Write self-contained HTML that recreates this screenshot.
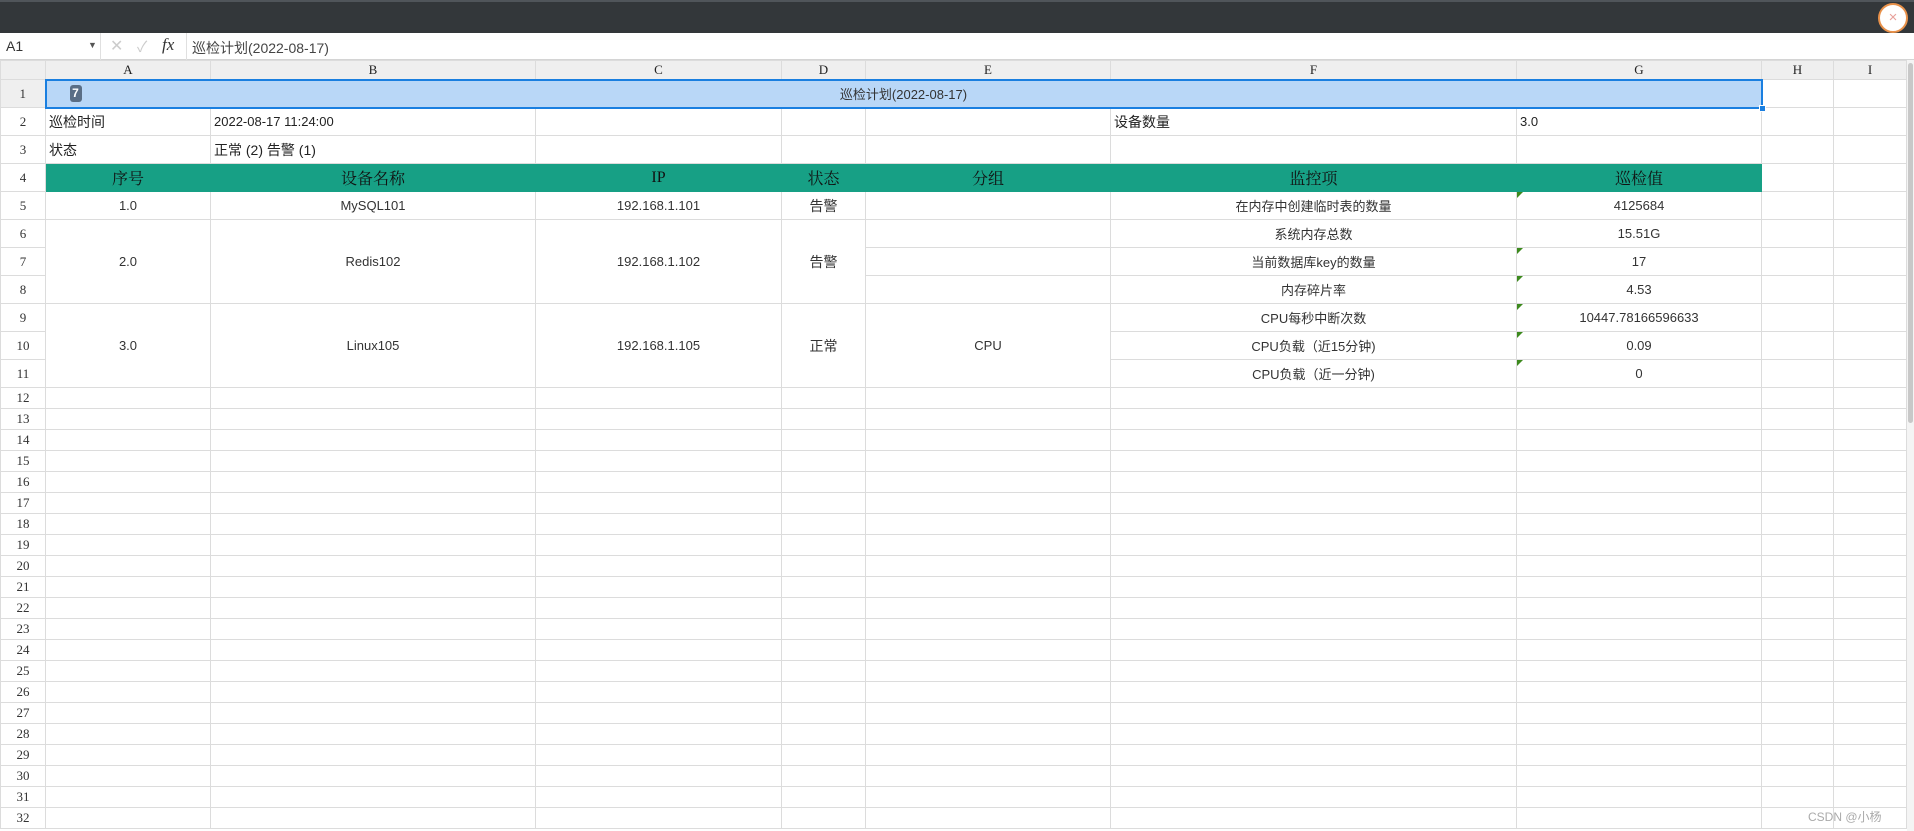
<!DOCTYPE html>
<html><head><meta charset="utf-8"><style>
*{box-sizing:border-box;margin:0;padding:0}
body{width:1914px;height:831px;overflow:hidden;background:#fff;position:relative;font-family:"Liberation Sans","Noto Sans CJK SC",sans-serif;color:#222}
.top{position:absolute;left:0;top:0;width:1914px;height:33px;background:#33373a;border-top:2px solid #50555a}
.close{position:absolute;left:1878px;top:1px;width:30px;height:30px;border-radius:50%;background:#fff;border:2px solid #e8914a;color:#e8a09a;font-size:15px;text-align:center;line-height:25px}
.fbar{position:absolute;left:0;top:33px;width:1914px;height:27px;border-bottom:1px solid #d4d4d4;font-size:14px}
.fbar span{position:absolute;top:5px}
.sep{position:absolute;top:0;width:1px;height:27px;background:#e0e0e0}
table{position:absolute;left:0;top:60px;border-collapse:collapse;table-layout:fixed}
td{border:1px solid #dcdcdc;font-size:13px;text-align:center;white-space:nowrap;overflow:visible;padding:0;position:relative;color:#333}
tr.h td{height:19px;background:#efefef;font-family:"Liberation Serif","Noto Serif CJK SC",serif;font-size:13px;color:#222}
tr.r td{height:28px}
tr.s td{height:21px}
td.rh{background:#fff;font-family:"Liberation Serif",serif;font-size:13px;color:#333}
td.l{text-align:left;padding-left:3px;font-size:14px;color:#222}
tr.g td.gc{background:#17a085;font-family:"Liberation Serif","Noto Serif CJK SC",serif;font-size:16px;color:#111;border-color:#17a085}
.tri{position:absolute;left:0;top:0;width:0;height:0;border-top:6px solid #3d8a1e;border-right:6px solid transparent}
.sb{position:absolute;left:1907px;top:60px;width:7px;height:771px;background:#f4f4f4}
.sb div{position:absolute;left:1px;top:3px;width:5px;height:360px;background:#c8c8c8;border-radius:3px}
</style></head><body>
<div class="top"><div class="close">×</div></div>
<div class="fbar">
<span style="left:6px;color:#333;font-size:14px">A1</span>
<span style="left:88px;top:7px;font-size:9px;color:#555">▼</span>
<div class="sep" style="left:100px"></div>
<span style="left:110px;color:#ccc;font-size:16px;top:3px">✕</span>
<span style="left:137px;color:#ccc;font-size:15px;top:3px">✓</span>
<span style="left:162px;font-style:italic;font-family:'Liberation Serif',serif;font-size:17px;color:#333;top:2px">fx</span>
<div class="sep" style="left:186px"></div>
<span style="left:192px;color:#444;font-size:14px;top:5px">巡检计划(2022-08-17)</span>
</div>
<table>
<colgroup><col style="width:45px"><col style="width:165px"><col style="width:325px"><col style="width:246px"><col style="width:84px"><col style="width:245px"><col style="width:406px"><col style="width:245px"><col style="width:72px"><col style="width:73px"></colgroup>
<tr class="h"><td></td><td>A</td><td>B</td><td>C</td><td>D</td><td>E</td><td>F</td><td>G</td><td>H</td><td>I</td></tr>
<tr class="r"><td class="rh" style="background:#efefef">1</td><td colspan="7" style="background:#b9d7f7;border:2px solid #1a7fe0;font-size:13px;color:#333"><span style="position:absolute;left:23px;top:4px;width:12px;height:17px;background:#5a6e86;border-radius:3px;color:#fff;font-size:12px;line-height:17px;font-weight:bold">7</span>巡检计划(2022-08-17)<span style="position:absolute;right:-5px;bottom:-5px;width:7px;height:7px;background:#1a7fe0;border:1px solid #fff"></span></td><td></td><td></td></tr>
<tr class="r"><td class="rh">2</td><td class="l">巡检时间</td><td class="l" style="font-size:13px">2022-08-17 11:24:00</td><td></td><td></td><td></td><td class="l">设备数量</td><td class="l" style="font-size:13px">3.0</td><td></td><td></td></tr>
<tr class="r"><td class="rh">3</td><td class="l">状态</td><td class="l">正常 (2) 告警 (1)</td><td></td><td></td><td></td><td></td><td></td><td></td><td></td></tr>
<tr class="r g"><td class="rh">4</td><td class="gc">序号</td><td class="gc">设备名称</td><td class="gc">IP</td><td class="gc">状态</td><td class="gc">分组</td><td class="gc">监控项</td><td class="gc">巡检值</td><td></td><td></td></tr>
<tr class="r"><td class="rh">5</td><td>1.0</td><td>MySQL101</td><td>192.168.1.101</td><td style="font-size:14px">告警</td><td></td><td>在内存中创建临时表的数量</td><td><i class="tri"></i>4125684</td><td></td><td></td></tr>
<tr class="r"><td class="rh">6</td><td rowspan="3">2.0</td><td rowspan="3">Redis102</td><td rowspan="3">192.168.1.102</td><td rowspan="3" style="font-size:14px">告警</td><td></td><td>系统内存总数</td><td>15.51G</td><td></td><td></td></tr>
<tr class="r"><td class="rh">7</td><td></td><td>当前数据库key的数量</td><td><i class="tri"></i>17</td><td></td><td></td></tr>
<tr class="r"><td class="rh">8</td><td></td><td>内存碎片率</td><td><i class="tri"></i>4.53</td><td></td><td></td></tr>
<tr class="r"><td class="rh">9</td><td rowspan="3">3.0</td><td rowspan="3">Linux105</td><td rowspan="3">192.168.1.105</td><td rowspan="3" style="font-size:14px">正常</td><td rowspan="3">CPU</td><td>CPU每秒中断次数</td><td><i class="tri"></i>10447.78166596633</td><td></td><td></td></tr>
<tr class="r"><td class="rh">10</td><td>CPU负载（近15分钟)</td><td><i class="tri"></i>0.09</td><td></td><td></td></tr>
<tr class="r"><td class="rh">11</td><td>CPU负载（近一分钟)</td><td><i class="tri"></i>0</td><td></td><td></td></tr>
<tr class="s"><td class="rh">12</td><td></td><td></td><td></td><td></td><td></td><td></td><td></td><td></td><td></td></tr>
<tr class="s"><td class="rh">13</td><td></td><td></td><td></td><td></td><td></td><td></td><td></td><td></td><td></td></tr>
<tr class="s"><td class="rh">14</td><td></td><td></td><td></td><td></td><td></td><td></td><td></td><td></td><td></td></tr>
<tr class="s"><td class="rh">15</td><td></td><td></td><td></td><td></td><td></td><td></td><td></td><td></td><td></td></tr>
<tr class="s"><td class="rh">16</td><td></td><td></td><td></td><td></td><td></td><td></td><td></td><td></td><td></td></tr>
<tr class="s"><td class="rh">17</td><td></td><td></td><td></td><td></td><td></td><td></td><td></td><td></td><td></td></tr>
<tr class="s"><td class="rh">18</td><td></td><td></td><td></td><td></td><td></td><td></td><td></td><td></td><td></td></tr>
<tr class="s"><td class="rh">19</td><td></td><td></td><td></td><td></td><td></td><td></td><td></td><td></td><td></td></tr>
<tr class="s"><td class="rh">20</td><td></td><td></td><td></td><td></td><td></td><td></td><td></td><td></td><td></td></tr>
<tr class="s"><td class="rh">21</td><td></td><td></td><td></td><td></td><td></td><td></td><td></td><td></td><td></td></tr>
<tr class="s"><td class="rh">22</td><td></td><td></td><td></td><td></td><td></td><td></td><td></td><td></td><td></td></tr>
<tr class="s"><td class="rh">23</td><td></td><td></td><td></td><td></td><td></td><td></td><td></td><td></td><td></td></tr>
<tr class="s"><td class="rh">24</td><td></td><td></td><td></td><td></td><td></td><td></td><td></td><td></td><td></td></tr>
<tr class="s"><td class="rh">25</td><td></td><td></td><td></td><td></td><td></td><td></td><td></td><td></td><td></td></tr>
<tr class="s"><td class="rh">26</td><td></td><td></td><td></td><td></td><td></td><td></td><td></td><td></td><td></td></tr>
<tr class="s"><td class="rh">27</td><td></td><td></td><td></td><td></td><td></td><td></td><td></td><td></td><td></td></tr>
<tr class="s"><td class="rh">28</td><td></td><td></td><td></td><td></td><td></td><td></td><td></td><td></td><td></td></tr>
<tr class="s"><td class="rh">29</td><td></td><td></td><td></td><td></td><td></td><td></td><td></td><td></td><td></td></tr>
<tr class="s"><td class="rh">30</td><td></td><td></td><td></td><td></td><td></td><td></td><td></td><td></td><td></td></tr>
<tr class="s"><td class="rh">31</td><td></td><td></td><td></td><td></td><td></td><td></td><td></td><td></td><td></td></tr>
<tr class="s"><td class="rh">32</td><td></td><td></td><td></td><td></td><td></td><td></td><td></td><td></td><td></td></tr>
</table>
<div class="sb"><div></div></div>
<div style="position:absolute;left:1808px;top:808px;font-size:12px;color:#aaa">CSDN @小杨</div>
</body></html>
